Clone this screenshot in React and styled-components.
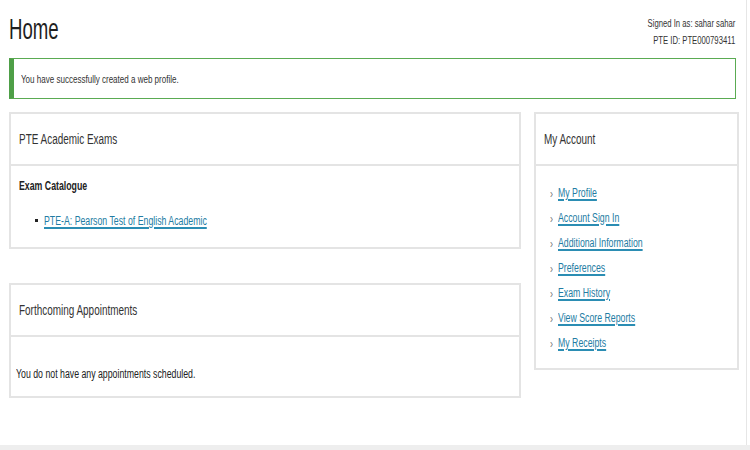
import React from 'react';
import styled, { createGlobalStyle, css } from 'styled-components';

const GlobalStyle = createGlobalStyle`
  html, body {
    margin: 0;
    padding: 0;
    background: #ffffff;
  }
  body {
    font-family: "Liberation Sans", Arial, sans-serif;
    color: #222222;
  }
`;

// the source page uses a narrow face, so text is squeezed horizontally
const narrow = (scale = 0.71, origin = 'left') => css`
  display: inline-block;
  white-space: nowrap;
  transform: scaleX(${scale});
  transform-origin: ${origin} center;
`;

// --- Layout ---
const Page = styled.div`
  width: 747px;
  height: 445px;
  box-sizing: border-box;
  padding: 0 10px 0 9px;
  border-right: 1px solid #e6e6e6;
  display: flex;
  flex-direction: column;
`;

const Footer = styled.div`
  height: 5px;
  width: 750px;
  background: #eeeeee;
`;

const Header = styled.div`
  display: flex;
  justify-content: space-between;
  align-items: flex-start;
  height: 58px;
`;

const Title = styled.h1`
  margin: 12px 0 0;
  font-size: 30px;
  line-height: 34px;
  font-weight: normal;
  color: #1f1f1f;
  ${narrow(0.62)}
`;

const UserInfo = styled.div`
  margin-top: 15px;
  display: flex;
  flex-direction: column;
  align-items: flex-end;
  padding-right: 1px;
`;

const UserLine = styled.span`
  font-size: 11px;
  line-height: 17px;
  color: #333333;
  ${narrow(0.7, 'right')}
`;

const Alert = styled.div`
  height: 41px;
  box-sizing: border-box;
  border: 1px solid #5aab52;
  border-left: 5px solid #4e9f47;
  display: flex;
  align-items: center;
  padding-left: 7px;
`;

const AlertText = styled.span`
  font-size: 11px;
  color: #333333;
  ${narrow(0.73)}
`;

const Columns = styled.div`
  display: grid;
  grid-template-columns: 512px 205px;
  column-gap: 13px;
  margin-top: 13px;
  align-items: start;
`;

const Stack = styled.div`
  display: flex;
  flex-direction: column;
  gap: 34px;
`;

// --- Panels ---
const Panel = styled.section`
  border: 2px solid #e4e4e4;
  background: #ffffff;
`;

const PanelHeader = styled.div`
  height: 52px;
  box-sizing: border-box;
  border-bottom: 2px solid #e4e4e4;
  display: flex;
  align-items: center;
  padding-left: 8px;
`;

const PanelTitle = styled.h2`
  margin: 0;
  font-size: 14px;
  font-weight: normal;
  color: #333333;
  ${narrow(0.71)}
`;

const PanelBody = styled.div`
  height: ${p => p.$height}px;
  box-sizing: border-box;
  padding: ${p => p.$pad || '0 8px'};
`;

const SubTitle = styled.div`
  font-weight: bold;
  font-size: 12px;
  line-height: 14px;
  color: #222222;
  ${narrow(0.73)}
`;

const BulletList = styled.ul`
  margin: 18px 0 0;
  padding-left: 25px;
  list-style: none;
`;

const BulletItem = styled.li`
  position: relative;
  line-height: 16px;
  &::before {
    content: '';
    position: absolute;
    left: -9px;
    top: 7px;
    width: 3px;
    height: 3px;
    background: #222222;
  }
`;

const TextLink = styled.a`
  color: #237ca3;
  font-size: 12.5px;
  line-height: 16px;
  text-decoration: underline;
  text-decoration-color: #2b8db3;
  text-decoration-thickness: 1.5px;
  text-underline-offset: 2px;
  cursor: pointer;
  ${narrow(0.7)}
`;

const Empty = styled.p`
  margin: 0;
  font-size: 12px;
  line-height: 14px;
  color: #222222;
  ${narrow(0.73)}
`;

const AccountList = styled.ul`
  list-style: none;
  margin: 0;
  padding: 19px 0 0 14px;
  display: flex;
  flex-direction: column;
  gap: 10px;
`;

const AccountItem = styled.li`
  display: flex;
  align-items: center;
  height: 15px;
`;

const Chevron = styled.span`
  width: 8px;
  color: #777777;
  font-size: 12px;
  line-height: 1;
  position: relative;
  top: 1px;
  ${narrow(0.75)}
`;

const accountLinks = [
  'My Profile',
  'Account Sign In',
  'Additional Information',
  'Preferences',
  'Exam History',
  'View Score Reports',
  'My Receipts',
];

export default function App() {
  return (
    <>
      <GlobalStyle />
      <Page>
        <Header>
          <Title>Home</Title>
          <UserInfo>
            <UserLine>Signed In as: sahar sahar</UserLine>
            <UserLine>PTE ID: PTE000793411</UserLine>
          </UserInfo>
        </Header>

        <Alert>
          <AlertText>You have successfully created a web profile.</AlertText>
        </Alert>

        <Columns>
          <Stack>
            <Panel>
              <PanelHeader>
                <PanelTitle>PTE Academic Exams</PanelTitle>
              </PanelHeader>
              <PanelBody $height={81} $pad="10px 8px 0">
                <SubTitle>Exam Catalogue</SubTitle>
                <BulletList>
                  <BulletItem>
                    <TextLink>PTE-A: Pearson Test of English Academic</TextLink>
                  </BulletItem>
                </BulletList>
              </PanelBody>
            </Panel>

            <Panel>
              <PanelHeader>
                <PanelTitle>Forthcoming Appointments</PanelTitle>
              </PanelHeader>
              <PanelBody $height={59} $pad="27px 5px 0">
                <Empty>You do not have any appointments scheduled.</Empty>
              </PanelBody>
            </Panel>
          </Stack>

          <Panel>
            <PanelHeader>
              <PanelTitle>My Account</PanelTitle>
            </PanelHeader>
            <PanelBody $height={202} $pad="0">
              <AccountList>
                {accountLinks.map(label => (
                  <AccountItem key={label}>
                    <Chevron>›</Chevron>
                    <TextLink>{label}</TextLink>
                  </AccountItem>
                ))}
              </AccountList>
            </PanelBody>
          </Panel>
        </Columns>
      </Page>
      <Footer />
    </>
  );
}
